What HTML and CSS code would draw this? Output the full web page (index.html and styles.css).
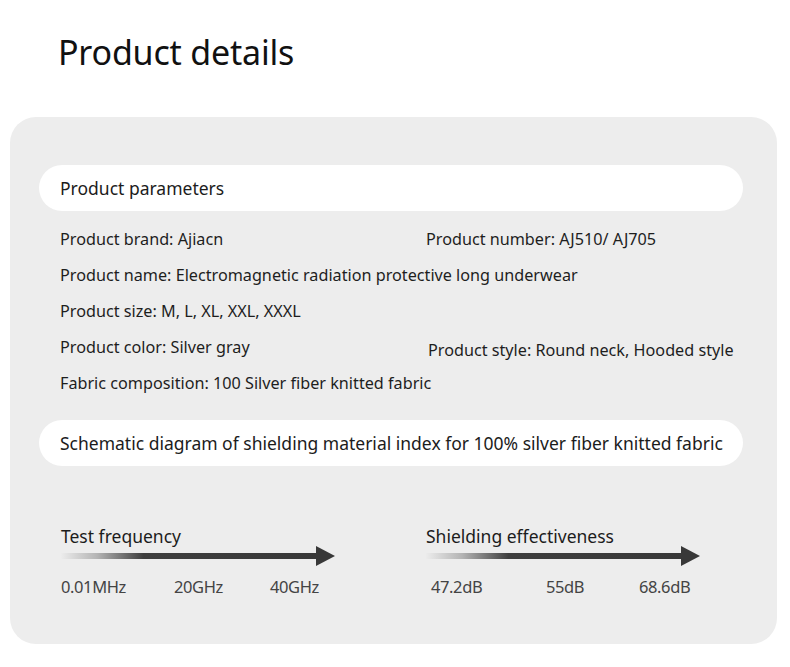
FILE: index.html
```html
<!DOCTYPE html>
<html lang="en">
<head>
<meta charset="utf-8">
<title>Product details</title>
<link rel="stylesheet" href="styles.css">
</head>
<body>
<h1 class="title">Product details</h1>
<section class="card">
  <div class="pill">Product parameters</div>
  <div class="params">
    <div class="row"><span class="col-left">Product brand: Ajiacn</span><span class="col-right">Product number: AJ510/ AJ705</span></div>
    <div class="row"><span>Product name: Electromagnetic radiation protective long underwear</span></div>
    <div class="row"><span>Product size: M, L, XL, XXL, XXXL</span></div>
    <div class="row"><span class="col-left">Product color: Silver gray</span><span class="col-right shift">Product style: Round neck, Hooded style</span></div>
    <div class="row"><span>Fabric composition: 100 Silver fiber knitted fabric</span></div>
  </div>
  <div class="pill pill-2">Schematic diagram of shielding material index for 100% silver fiber knitted fabric</div>
  <div class="diagram">
    <div class="group">
      <div class="label">Test frequency</div>
      <svg class="arrow" width="274" height="22" viewBox="0 0 274 22">
        <defs>
          <linearGradient id="g1" x1="0" x2="1" y1="0" y2="0">
            <stop offset="0" stop-color="#ececec"/>
            <stop offset="0.14" stop-color="#b4b4b4"/>
            <stop offset="0.32" stop-color="#3e3e3e"/>
            <stop offset="1" stop-color="#383838"/>
          </linearGradient>
        </defs>
        <rect x="0" y="8" width="258" height="6" fill="url(#g1)"/>
        <polygon points="255,1 274,11 255,21" fill="#383838"/>
      </svg>
      <div class="values v-left"><span>0.01MHz</span><span>20GHz</span><span>40GHz</span></div>
    </div>
    <div class="group">
      <div class="label">Shielding effectiveness</div>
      <svg class="arrow" width="274" height="22" viewBox="0 0 274 22">
        <defs>
          <linearGradient id="g2" x1="0" x2="1" y1="0" y2="0">
            <stop offset="0" stop-color="#ececec"/>
            <stop offset="0.14" stop-color="#b4b4b4"/>
            <stop offset="0.32" stop-color="#3e3e3e"/>
            <stop offset="1" stop-color="#383838"/>
          </linearGradient>
        </defs>
        <rect x="0" y="8" width="258" height="6" fill="url(#g2)"/>
        <polygon points="255,1 274,11 255,21" fill="#383838"/>
      </svg>
      <div class="values v-right"><span>47.2dB</span><span>55dB</span><span>68.6dB</span></div>
    </div>
  </div>
</section>
</body>
</html>
```

FILE: styles.css
```css
* { box-sizing: border-box; }
html, body {
  margin: 0;
  padding: 0;
  background: #ffffff;
}
body {
  font-family: "Noto Sans", "Open Sans", "Liberation Sans", sans-serif;
  color: #1e1e1e;
  width: 790px;
  height: 667px;
  overflow: hidden;
}
.title {
  margin: 0;
  padding: 28px 0 0 58px;
  height: 117px;
  font-size: 34px;
  font-weight: 400;
  line-height: 48px;
  color: #111;
  letter-spacing: -0.2px;
}
.card {
  margin: 0 13px 0 10px;
  height: 527px;
  background: #ededed;
  border-radius: 26px;
  padding: 48px 34px 0 29px;
}
.pill {
  background: #ffffff;
  height: 46px;
  border-radius: 23px;
  padding: 0 21px;
  display: flex;
  align-items: center;
  font-size: 17.5px;
  color: #1c1c1c;
  white-space: nowrap;
}
.params {
  margin-top: 10px;
  padding-left: 21px;
}
.row {
  display: flex;
  height: 36px;
  align-items: center;
  font-size: 16.2px;
  color: #1e1e1e;
  white-space: nowrap;
}
.col-left {
  width: 366px;
}
.col-right.shift {
  padding-left: 2px;
  padding-top: 6px;
}
.pill-2 {
  margin-top: 19px;
}
.diagram {
  display: grid;
  grid-template-columns: 365px 300px;
  padding-left: 22px;
  margin-top: 58px;
}
.label {
  font-size: 17.5px;
  line-height: 24px;
  color: #1c1c1c;
}
.arrow {
  display: block;
  margin-top: -3px;
}
.values {
  display: grid;
  margin-top: 9px;
  font-size: 16.5px;
  line-height: 22px;
  color: #444;
  letter-spacing: -0.4px;
}
.v-left {
  grid-template-columns: 113px 96px auto;
}
.v-right {
  padding-left: 5px;
  grid-template-columns: 115px 93px auto;
}
```
